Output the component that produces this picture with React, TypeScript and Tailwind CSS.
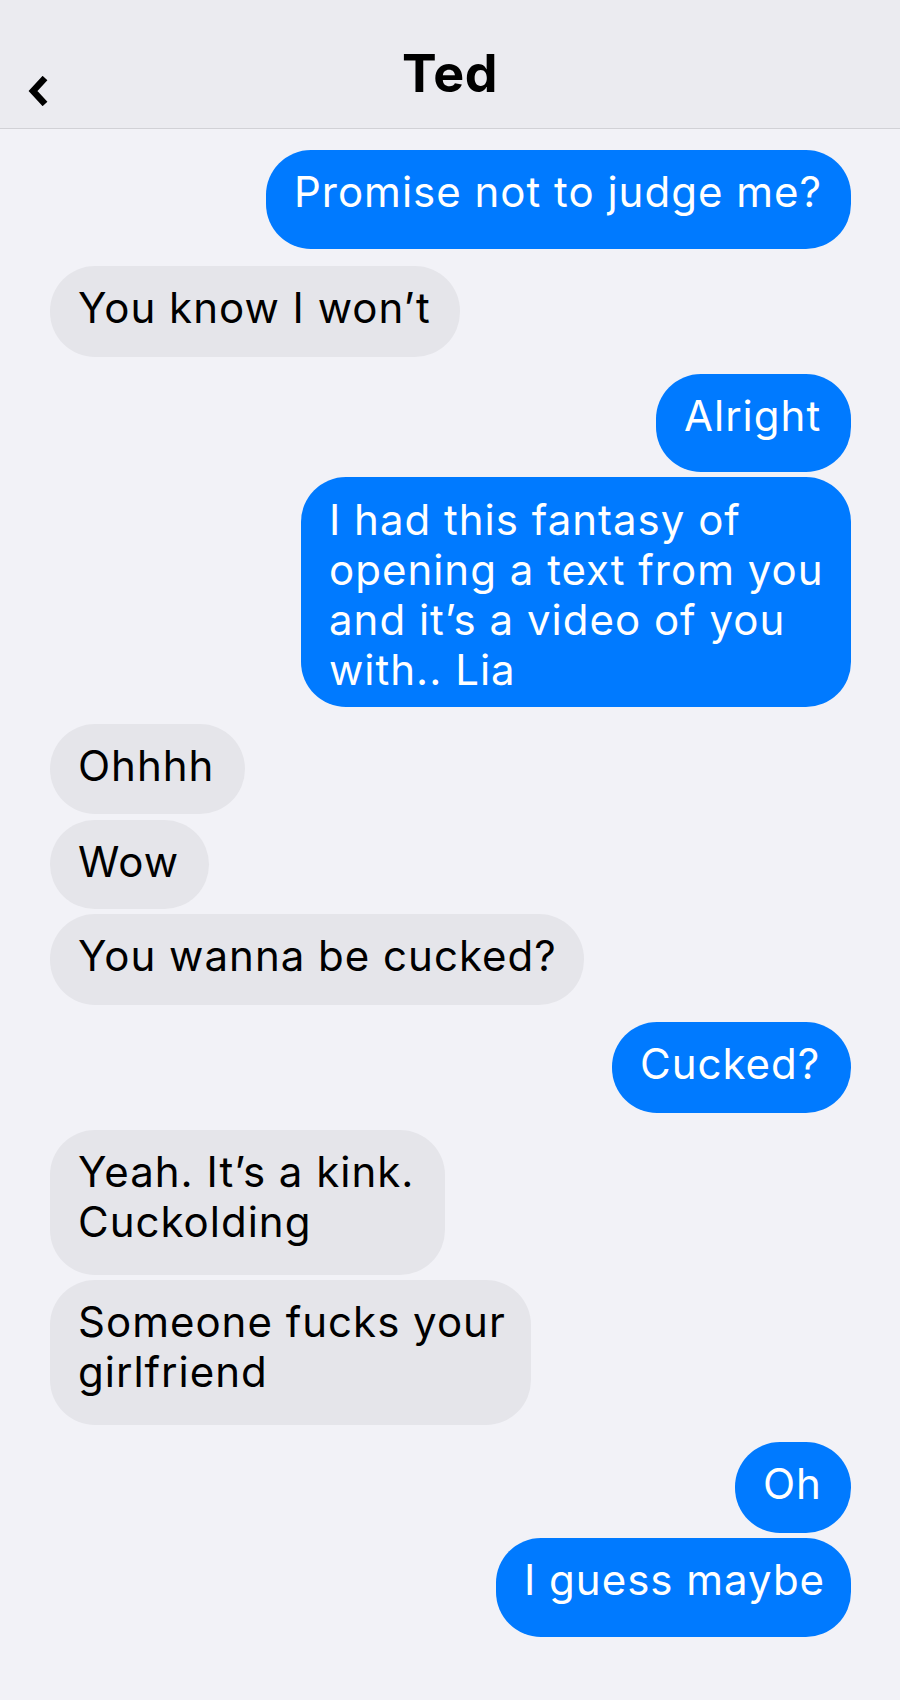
import React from "react";

type Msg = { me: boolean; lines: string[]; w: number; h: number; gap: number; pt?: number };

const msgs: Msg[] = [
  { me: true, lines: ["Promise not to judge me?"], w: 585, h: 99, gap: 21 },
  { me: false, lines: ["You know I won\u2019t"], w: 410, h: 91, gap: 17 },
  { me: true, lines: ["Alright"], w: 195, h: 98, gap: 17 },
  { me: true, lines: ["I had this fantasy of", "opening a text from you", "and it\u2019s a video of you", "with.. Lia"], w: 550, h: 230, gap: 5, pt: 18 },
  { me: false, lines: ["Ohhhh"], w: 195, h: 90, gap: 17 },
  { me: false, lines: ["Wow"], w: 159, h: 89, gap: 6 },
  { me: false, lines: ["You wanna be cucked?"], w: 534, h: 91, gap: 5 },
  { me: true, lines: ["Cucked?"], w: 239, h: 91, gap: 17 },
  { me: false, lines: ["Yeah. It\u2019s a kink.", "Cuckolding"], w: 395, h: 145, gap: 17 },
  { me: false, lines: ["Someone fucks your", "girlfriend"], w: 481, h: 145, gap: 5 },
  { me: true, lines: ["Oh"], w: 116, h: 91, gap: 17 },
  { me: true, lines: ["I guess maybe"], w: 355, h: 99, gap: 5 },
];

export default function App() {
  return (
    <div
      className="w-[900px] h-[1700px] bg-[#f2f2f7] overflow-hidden"
      style={{ fontFamily: "Inter, 'Noto Sans', sans-serif" }}
    >
      <header className="h-[129px] bg-[#ebebf0] border-b border-[#d1d1d6] grid grid-cols-[1fr_auto_1fr]">
        <div className="pl-[28px] pt-[76px]">
          <svg width="22" height="30" viewBox="0 0 22 30" className="block">
            <polyline points="17,2 5,15 17,28" fill="none" stroke="#000" strokeWidth="6.5" strokeLinejoin="miter" />
          </svg>
        </div>
        <div className="pt-[42px] text-[52px] leading-[64px] font-bold text-black tracking-[0.5px]">Ted</div>
        <div />
      </header>
      <div className="flex flex-col pl-[50px] pr-[49px]">
        {msgs.map((m, i) => (
          <div
            key={i}
            className={`flex ${m.me ? "justify-end" : "justify-start"}`}
            style={{ marginTop: m.gap }}
          >
            <div
              className={`rounded-[45px] pl-[28px] text-[42px] leading-[50px] tracking-[1px] whitespace-nowrap ${
                m.me ? "bg-[#007aff] text-white" : "bg-[#e5e5ea] text-black"
              }`}
              style={{ width: m.w, height: m.h, paddingTop: m.pt ?? 17 }}
            >
              {m.lines.map((l, j) => (
                <div key={j}>{l}</div>
              ))}
            </div>
          </div>
        ))}
      </div>
    </div>
  );
}
